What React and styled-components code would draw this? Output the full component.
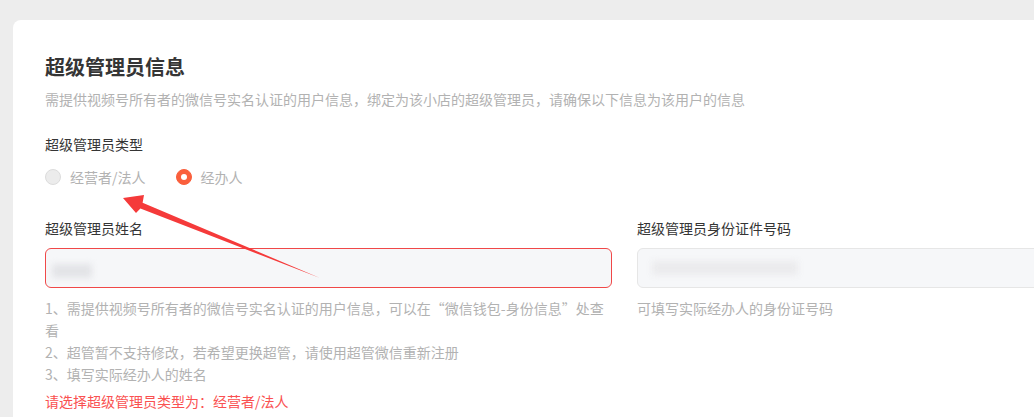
import styled, { createGlobalStyle } from 'styled-components'

const Global = createGlobalStyle`
    html, body {
        margin: 0;
        padding: 0;
        overflow: hidden;
        background: #ededed;
        font-family: "Noto Sans CJK SC", "Noto Sans", "Liberation Sans", sans-serif;
    }
`
const Page = styled.div`
    position: relative;
    width: 100vw;
    height: 100vh;
    overflow: hidden;
    padding: 20px 0 0 13px;
    box-sizing: border-box;
`
const Card = styled.section`
    width: 1240px;
    height: 100%;
    box-sizing: border-box;
    padding: 33px 32px 0;
    background: #fff;
    border-radius: 8px 0 0 0;
`
const Title = styled.h2`
    margin: 0;
    font-size: 20px;
    line-height: 28px;
    font-weight: 700;
    color: #353535;
`
const Desc = styled.p`
    margin: 8px 0 0;
    font-size: 14px;
    line-height: 20px;
    color: #b2b2b2;
`
const Label = styled.div`
    margin-top: ${p => p.$top || 0}px;
    font-size: 14px;
    line-height: 20px;
    color: #353535;
`
const RadioGroup = styled.div`
    display: flex;
    gap: 30px;
    margin-top: 13px;
`
const RadioItem = styled.label`
    display: flex;
    align-items: center;
    gap: 9px;
    font-size: 14px;
    line-height: 20px;
    color: #b2b2b2;
`
const Circle = styled.span`
    width: 16px;
    height: 16px;
    box-sizing: border-box;
    border-radius: 50%;
    display: flex;
    align-items: center;
    justify-content: center;
    background: ${p => (p.$checked ? '#fa5f3c' : '#ececec')};
    border: 1px solid ${p => (p.$checked ? '#fa5f3c' : '#dcdcdc')};
    &::after {
        content: '';
        display: ${p => (p.$checked ? 'block' : 'none')};
        width: 6px;
        height: 6px;
        border-radius: 50%;
        background: #fff;
    }
`
const Columns = styled.div`
    display: grid;
    grid-template-columns: 567px 567px;
    column-gap: 25px;
    margin-top: 31px;
`
const Field = styled.div`
    display: flex;
    flex-direction: column;
`
const Input = styled.div`
    margin-top: 10px;
    height: 40px;
    box-sizing: border-box;
    border: 1px solid ${p => (p.$error ? '#f04848' : '#e6e6e6')};
    border-radius: 6px;
    background: #f6f7f9;
    display: flex;
    align-items: center;
    padding-left: ${p => p.$pad}px;
`
const Blur = styled.span`
    width: ${p => p.$w}px;
    height: 14px;
    background: ${p => p.$c};
    filter: blur(3px);
    margin-top: ${p => p.$dy}px;
`
const Hints = styled.div`
    margin-top: 9px;
    font-size: 14px;
    line-height: 22px;
    color: #b2b2b2;
`
const Error = styled.div`
    margin-top: 5px;
    font-size: 14px;
    line-height: 22px;
    color: #fa5151;
`
const Arrow = styled.svg`
    position: absolute;
    left: 0;
    top: 0;
    pointer-events: none;
`

export default function App() {
    return (
        <Page>
            <Global />
            <Card>
                <Title>超级管理员信息</Title>
                <Desc>需提供视频号所有者的微信号实名认证的用户信息，绑定为该小店的超级管理员，请确保以下信息为该用户的信息</Desc>
                <Label $top={25}>超级管理员类型</Label>
                <RadioGroup>
                    <RadioItem><Circle />经营者/法人</RadioItem>
                    <RadioItem><Circle $checked />经办人</RadioItem>
                </RadioGroup>
                <Columns>
                    <Field>
                        <Label>超级管理员姓名</Label>
                        <Input $error $pad={6}>
                            <Blur $w={40} $c="#e3e4e7" $dy={6} />
                        </Input>
                        <Hints>
                            <div>1、需提供视频号所有者的微信号实名认证的用户信息，可以在“微信钱包-身份信息”处查看</div>
                            <div>2、超管暂不支持修改，若希望更换超管，请使用超管微信重新注册</div>
                            <div>3、填写实际经办人的姓名</div>
                        </Hints>
                        <Error>请选择超级管理员类型为：经营者/法人</Error>
                    </Field>
                    <Field>
                        <Label>超级管理员身份证件号码</Label>
                        <Input $pad={14}>
                            <Blur $w={146} $c="#ebebed" $dy={0} />
                        </Input>
                        <Hints>可填写实际经办人的身份证号码</Hints>
                    </Field>
                </Columns>
            </Card>
            <Arrow width="1034" height="417" viewBox="0 0 1034 417">
                <polygon
                    points="123,198 144,195 142.6,202.8 320,278 140.4,208.4 136,213"
                    fill="#f53a3a"
                />
            </Arrow>
        </Page>
    )
}
